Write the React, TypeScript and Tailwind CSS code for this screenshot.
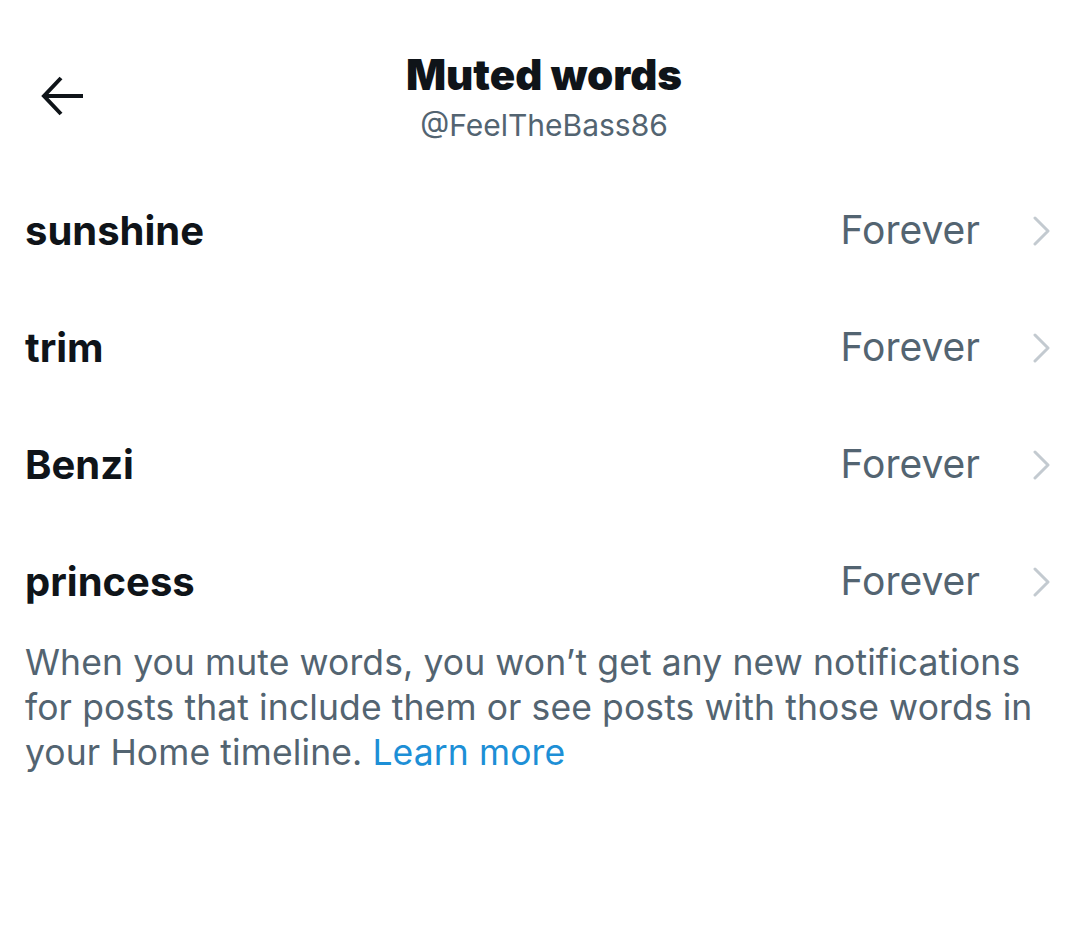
import React from "react";

const rows = ["sunshine", "trim", "Benzi", "princess"];

function BackArrow() {
  return (
    <svg width="44" height="40" viewBox="0 0 44 40" fill="none" className="block">
      <path d="M3 20 H42" stroke="#0f1419" strokeWidth="4" strokeLinecap="butt" />
      <path d="M20 2 L3 20 L20 38" stroke="#0f1419" strokeWidth="4" strokeLinecap="butt" strokeLinejoin="miter" />
    </svg>
  );
}

function Chevron() {
  return (
    <svg width="18" height="30" viewBox="0 0 18 30" fill="none" className="block">
      <path d="M2 2 L15 15 L2 28" stroke="#c3cad0" strokeWidth="3" strokeLinecap="round" strokeLinejoin="round" />
    </svg>
  );
}

export default function App() {
  return (
    <div
      className="w-[1088px] h-[944px] bg-white text-[#0f1419] overflow-hidden"
      style={{ fontFamily: "Inter, 'Noto Sans', 'Liberation Sans', sans-serif" }}
    >
      <header className="relative pt-[51px] flex flex-col items-center">
        <div className="absolute left-[41px] top-[76px]">
          <BackArrow />
        </div>
        <h1 className="text-[42px] leading-[48px] font-black tracking-[0px]">Muted words</h1>
        <div className="mt-[8px] text-[30px] leading-[36px] text-[#536471]">@FeelTheBass86</div>
      </header>

      <div className="mt-[29px] px-[25px]">
        {rows.map((w) => (
          <div key={w} className="h-[117px] flex items-center">
            <div className="flex-1 text-[40px] font-bold">{w}</div>
            <div className="text-[39px] text-[#536471]">Forever</div>
            <div className="ml-[53px] mr-[12px]">
              <Chevron />
            </div>
          </div>
        ))}
        <p className="text-[35.5px] leading-[45px] text-[#536471] whitespace-nowrap tracking-[0.1px]">
          When you mute words, you won’t get any new notifications
          <br />
          for posts that include them or see posts with those words in
          <br />
          your Home timeline. <span className="text-[#1d8fd6]">Learn more</span>
        </p>
      </div>
    </div>
  );
}
